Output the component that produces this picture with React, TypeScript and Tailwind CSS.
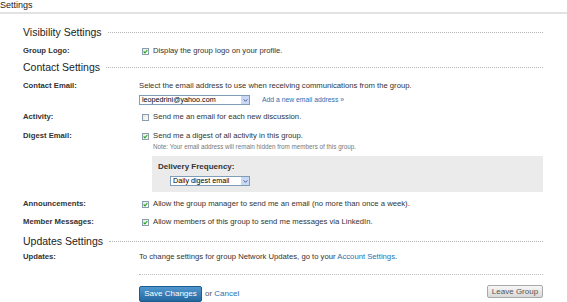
import React from "react";

function Check({ on }: { on?: boolean }) {
  return (
    <span className="ml-[3px] mr-[4px] flex h-[7px] w-[7px] shrink-0 items-center justify-center border border-[#8a9db0] bg-gradient-to-br from-[#e6e6dc] to-white">
      {on && (
        <svg viewBox="0 0 6 6" className="h-[5px] w-[5px]">
          <path d="M0.8 3 L2.4 4.6 L5.2 1.2" fill="none" stroke="#21a321" strokeWidth="1.3" />
        </svg>
      )}
    </span>
  );
}

function Select({ value, width }: { value: string; width: string }) {
  return (
    <div className={`flex h-[10px] items-center border border-[#7f9db9] bg-white ${width}`}>
      <span className="flex-1 pl-[2px] text-[7.2px] leading-none text-black">{value}</span>
      <span className="flex h-full w-[9px] items-center justify-center border-l border-white bg-[#c9d9f5]">
        <svg viewBox="0 0 6 4" className="h-[3px] w-[5px]">
          <path d="M0.6 0.6 L3 3 L5.4 0.6" fill="none" stroke="#2c3f7a" strokeWidth="1.1" />
        </svg>
      </span>
    </div>
  );
}

function Heading({ title, mt }: { title: string; mt: string }) {
  return (
    <div className={`flex h-[12px] items-center ${mt}`}>
      <span className="text-[10.5px] leading-[12px] text-[#222]">{title}</span>
      <div className="ml-[6px] flex-1 border-t border-dotted border-[#b5b5b5]" />
    </div>
  );
}

function Row({ label, mt, children }: { label?: string; mt: string; children: React.ReactNode }) {
  return (
    <div className={`flex h-[10px] items-center ${mt}`}>
      <div className="w-[116px] shrink-0 font-bold text-[#333]">{label}</div>
      <div className="flex items-center">{children}</div>
    </div>
  );
}

export default function App() {
  return (
    <div className="h-[302px] w-[567px] overflow-hidden bg-white font-['Liberation_Sans',Arial,sans-serif] text-[7.7px] leading-[10px] text-[#333]">
      <div className="h-[14px] border-b-2 border-[#e2e2e2] text-[9px] leading-[10px] text-[#222]">Settings</div>

      <div className="pl-[23px] pr-[24px]">
        <Heading title="Visibility Settings" mt="mt-[12px]" />
        <Row label="Group Logo:" mt="mt-[8px]">
          <Check on />
          <span>Display the group logo on your profile.</span>
        </Row>

        <Heading title="Contact Settings" mt="mt-[5px]" />
        <Row label="Contact Email:" mt="mt-[8px]">
          <span>Select the email address to use when receiving communications from the group.</span>
        </Row>
        <Row mt="mt-[4px]">
          <Select value="leopedrini@yahoo.com" width="w-[111px]" />
          <a className="ml-[12px] text-[6.8px] text-[#2a6fb4]">Add a new email address »</a>
        </Row>
        <Row label="Activity:" mt="mt-[7px]">
          <Check />
          <span>Send me an email for each new discussion.</span>
        </Row>
        <Row label="Digest Email:" mt="mt-[9px]">
          <Check on />
          <span>Send me a digest of all activity in this group.</span>
        </Row>
        <div className="mt-[2px] flex h-[8px] items-center pl-[130px] text-[6.3px] text-[#777]">
          Note: Your email address will remain hidden from members of this group.
        </div>
        <div className="ml-[129px] mt-[5px] h-[36px] bg-[#ebebeb] pl-[6px] pt-[6px]">
          <div className="font-bold text-[8px] text-[#333]">Delivery Frequency:</div>
          <div className="ml-[12px] mt-[4px]">
            <Select value="Daily digest email" width="w-[80px]" />
          </div>
        </div>

        <Row label="Announcements:" mt="mt-[7px]">
          <Check on />
          <span>Allow the group manager to send me an email (no more than once a week).</span>
        </Row>
        <Row label="Member Messages:" mt="mt-[8px]">
          <Check on />
          <span>Allow members of this group to send me messages via LinkedIn.</span>
        </Row>

        <Heading title="Updates Settings" mt="mt-[8px]" />
        <Row label="Updates:" mt="mt-[5px]">
          <span>
            To change settings for group Network Updates, go to your{" "}
            <a className="text-[#2a6fb4]">Account Settings</a>.
          </span>
        </Row>

        <div className="ml-[116px] mt-[12px] border-t border-dotted border-[#bdbdbd]" />

        <div className="ml-[116px] mt-[11px] flex items-start justify-between">
          <div className="flex items-center">
            <button className="h-[16px] w-[63px] rounded-[2px] border border-[#1d5c8e] bg-gradient-to-b from-[#4f97cf] to-[#2468a0] text-[8px] leading-none text-white">
              Save Changes
            </button>
            <span className="ml-[3px] text-[8px] text-[#555]">
              or <a className="text-[#2a6fb4]">Cancel</a>
            </span>
          </div>
          <button className="-mt-[1px] h-[13px] w-[56px] rounded-[2px] border border-[#a9a9a9] bg-gradient-to-b from-[#f7f7f7] to-[#d9d9d9] text-[8px] leading-none text-[#555]">
            Leave Group
          </button>
        </div>
      </div>
    </div>
  );
}
